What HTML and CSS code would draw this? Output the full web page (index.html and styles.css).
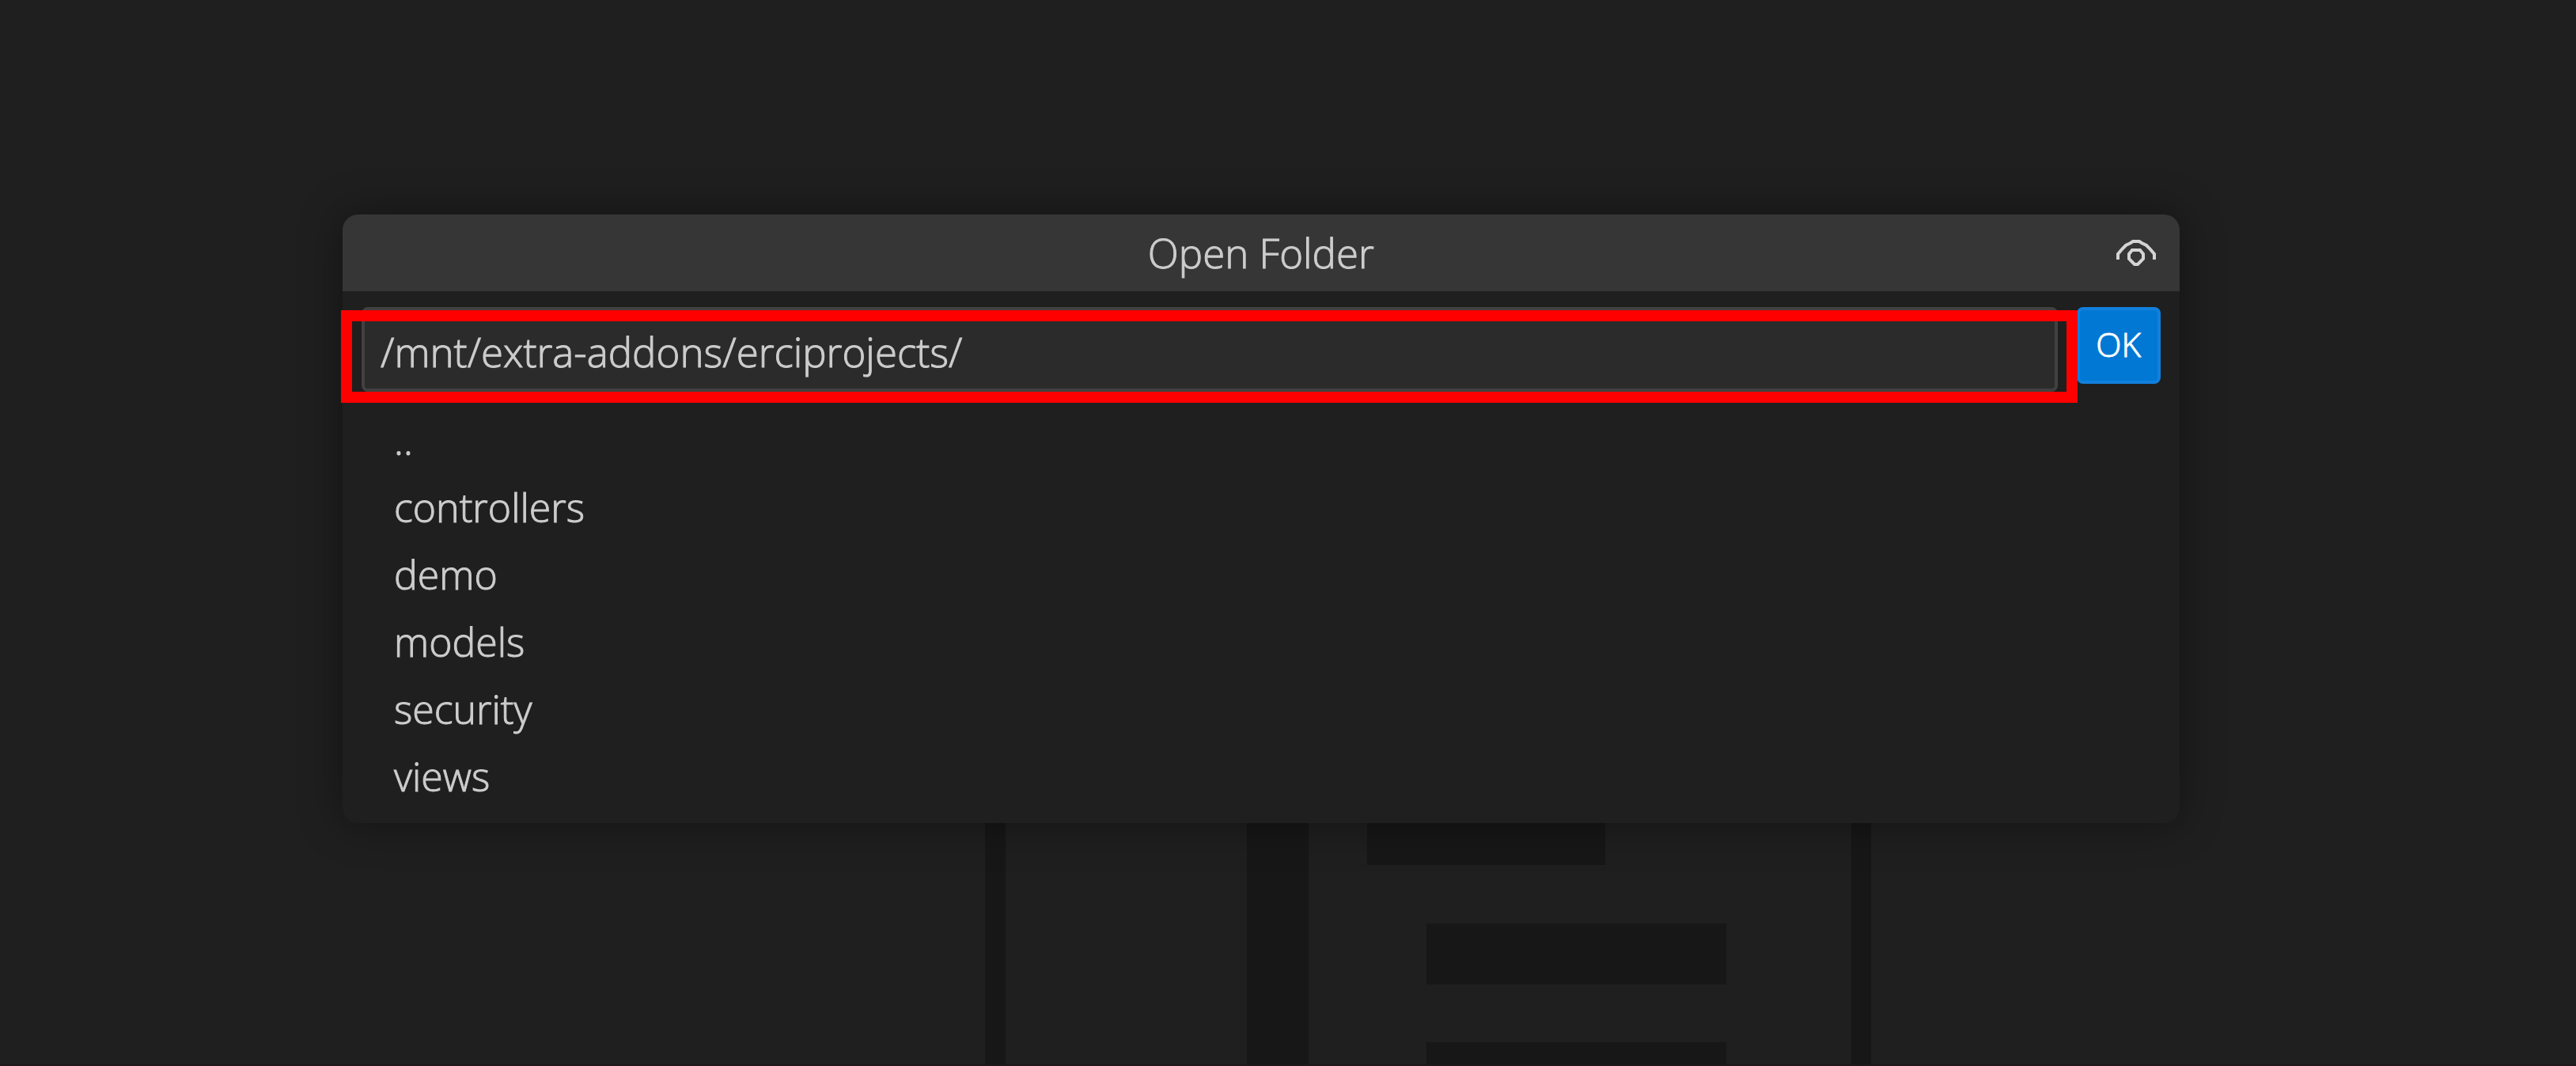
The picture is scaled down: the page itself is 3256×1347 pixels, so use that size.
FILE: index.html
```html
<!DOCTYPE html>
<html lang="en">
<head>
<meta charset="utf-8">
<title>Open Folder</title>
<link rel="stylesheet" href="styles.css">
</head>
<body>
<main class="workbench">
  <svg class="watermark" viewBox="0 0 1120 307" aria-hidden="true">
    <path d="M0 0h26v307H0zM331 0h78v307h-78zM483 0h301v53H483zM558 127h379v77H558zM558 277h379v30H558zM1095 0h25v307h-25z"/>
  </svg>
  <form class="dialog" aria-labelledby="dialog-title">
    <header class="dialog-header">
      <h1 class="dialog-title" id="dialog-title">Open Folder</h1>
      <button class="icon-button" type="button" aria-label="Show hidden files">
        <svg class="eye" viewBox="0 0 50 36" aria-hidden="true">
          <path d="M2 26v-7L7 13l5-5 6-3 3-2h8l3 2 6 3 5 5 5 6v7"/>
          <path d="M20 14h10l4 5v6l-4 4-3 3h-4l-3-3-4-4v-6z"/>
        </svg>
      </button>
    </header>
    <div class="path-row">
      <div class="path-field">
        <input class="path-input" type="text" aria-label="Folder path" value="/mnt/extra-addons/erciprojects/" spellcheck="false">
        <span class="highlight"></span>
      </div>
      <button class="ok-button" type="button">OK</button>
    </div>
    <ul class="folder-list">
      <li class="folder">..</li>
      <li class="folder">controllers</li>
      <li class="folder">demo</li>
      <li class="folder">models</li>
      <li class="folder">security</li>
      <li class="folder">views</li>
    </ul>
  </form>
</main>
</body>
</html>
```
FILE: styles.css
```css
* {
  box-sizing: border-box;
}

body {
  margin: 0;
  background: #1f1f1f;
  color: #cccccc;
  font-family: "Open Sans", "Noto Sans", sans-serif;
  font-size: 51px;
  font-weight: 300;
  -webkit-text-stroke: 1px currentColor;
}

.workbench {
  position: relative;
  min-height: 100vh;
  padding: 271px 15.4% 0 13.3%;
  border-bottom: 2px solid #201719;
  overflow: hidden;
}

.watermark {
  position: absolute;
  left: 38.24%;
  top: 1040px;
  width: 34.4%;
  fill: #171717;
}

.dialog {
  position: relative;
  padding-bottom: 16px;
  border-radius: 20px;
  background: #1f1f1f;
  box-shadow: 0 0 54px rgba(0, 0, 0, 0.4);
}

.dialog-header {
  display: grid;
  grid-template-columns: 1fr auto 1fr;
  align-items: center;
  height: 97px;
  padding: 0 30px;
  border-radius: 20px 20px 0 0;
  background: #363636;
}

.dialog-title {
  grid-column: 2;
  margin: 0;
  font-size: 51px;
  font-weight: 300;
  line-height: 97px;
}

.icon-button {
  justify-self: end;
  display: flex;
  padding: 0;
  border: 0;
  background: none;
}

.eye {
  width: 50px;
  height: 36px;
  fill: none;
  stroke: #d4d4d4;
  stroke-width: 4;
}

.path-row {
  display: flex;
  align-items: flex-start;
  gap: 24px;
  padding: 20px 24px 19px;
}

.path-field {
  position: relative;
  flex: 1;
  height: 107px;
}

.path-input {
  display: block;
  width: 100%;
  height: 100%;
  padding: 4px 20px 0;
  border: 4px solid #414141;
  border-radius: 8px;
  background: #2b2b2b;
  color: inherit;
  font: inherit;
}

.highlight {
  position: absolute;
  inset: 4px -25px -14px -26px;
  border: 14px solid #ff0000;
  pointer-events: none;
}

.ok-button {
  width: 106px;
  height: 97px;
  padding: 0 0 4px;
  border: 4px solid #1180de;
  border-radius: 8px;
  background: #0078d4;
  color: #ffffff;
  font-family: inherit;
  font-size: 42px;
  font-weight: 300;
}

.folder-list {
  margin: 0;
  padding: 0 65px;
  font-size: 50px;
  list-style: none;
}

.folder {
  line-height: 85px;
}
```
